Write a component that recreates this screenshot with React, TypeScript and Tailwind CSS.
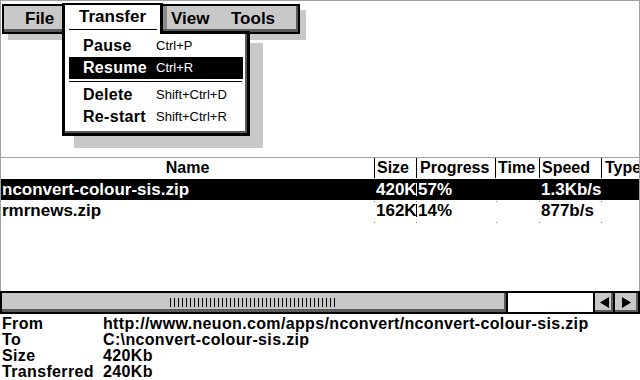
import React from 'react'

const font = "font-['Liberation_Sans',Arial,sans-serif]"

const columns = [
  { key: 'name', label: 'Name', w: 'w-[373px]', head: 'justify-center' },
  { key: 'size', label: 'Size', w: 'w-[42px]', head: 'pl-[2px]' },
  { key: 'progress', label: 'Progress', w: 'w-[79px]', head: 'pl-[3px]' },
  { key: 'time', label: 'Time', w: 'w-[44px]', head: 'pl-[2px]' },
  { key: 'speed', label: 'Speed', w: 'w-[62px]', head: 'pl-[2px]' },
  { key: 'type', label: 'Type', w: 'flex-1', head: 'pl-[3px]' },
]

const files = [
  { name: 'nconvert-colour-sis.zip', size: '420K', progress: '57%', time: '', speed: '1.3Kb/s', selected: true },
  { name: 'rmrnews.zip', size: '162K', progress: '14%', time: '', speed: '877b/s', selected: false },
]

const menuItems = [
  { label: 'Pause', keys: 'Ctrl+P', active: false, row: 'h-[23px]' },
  { label: 'Resume', keys: 'Ctrl+R', active: true, row: 'h-[22px]' },
  { label: 'Delete', keys: 'Shift+Ctrl+D', active: false, row: 'h-[22px]', sep: true },
  { label: 'Re-start', keys: 'Shift+Ctrl+R', active: false, row: 'h-[22px]' },
]

const details = [
  ['From', 'http://www.neuon.com/apps/nconvert/nconvert-colour-sis.zip'],
  ['To', 'C:\\nconvert-colour-sis.zip'],
  ['Size', '420Kb'],
  ['Transferred', '240Kb'],
]

function Grip() {
  return (
    <svg width="168" height="9" viewBox="0 0 168 9" className="block">
      {Array.from({ length: 42 }).map((_, i) => (
        <rect key={i} x={i * 4} y="0" width="1" height="9" fill="#000" />
      ))}
    </svg>
  )
}

function Arrow({ dir }: { dir: 'left' | 'right' }) {
  return (
    <svg width="9" height="11" viewBox="0 0 9 11" className="block">
      {dir === 'left' ? (
        <polygon points="9,0 9,11 0,5.5" fill="#000" />
      ) : (
        <polygon points="0,0 0,11 9,5.5" fill="#000" />
      )}
    </svg>
  )
}

function FileRow({ file }: { file: (typeof files)[number] }) {
  const sel = file.selected
  const cells = [file.name, file.size, file.progress, file.time, file.speed, '']
  return (
    <div className={`relative flex h-[21px] items-center text-[17px] font-bold leading-[21px] ${sel ? 'bg-black text-white' : 'text-black'}`}>
      {columns.map((c, i) => (
        <div
          key={c.key}
          className={`${c.w} relative h-full overflow-hidden whitespace-nowrap ${i === 0 ? 'pl-[1px]' : 'pl-[2px]'}`}
        >
          {cells[i]}
          {i === 2 && (
            <span className={`absolute left-0 top-[4px] h-[13px] w-px ${sel ? 'bg-white' : 'bg-black'}`} />
          )}
        </div>
      ))}
      {/* dotted column ticks below the row */}
      <div className="absolute bottom-[-1px] left-0 right-0 flex">
        {[373, 415, 495, 538, 600].map((x) => (
          <span key={x} className="absolute h-px w-px bg-[#808080]" style={{ left: x }} />
        ))}
      </div>
    </div>
  )
}

function MenuOverlay() {
  return (
    <>
      {/* shadows */}
      <div className="absolute left-[8px] top-[10px] h-[30px] w-[298px] bg-[#c8c8c8]" />
      <div className="absolute left-[74px] top-[43px] h-[105px] w-[189px] bg-[#c8c8c8]" />

      {/* menu bar */}
      <div className="absolute left-[2px] top-[4px] flex h-[30px] w-[298px] border-2 border-black bg-[#c8c8c8] text-[17px] font-bold leading-[25px] shadow-[inset_-2px_-3px_0_0_#5a5a5a]">
        <div className="w-[58px] pl-[21px]">File</div>
        <div className="w-[101px]" />
        <div className="h-[23px] w-[4px] bg-[#8c8c8c]" />
        <div className="w-[62px] pl-[4px]">View</div>
        <div className="pl-[2px]">Tools</div>
      </div>

      {/* dropdown panel */}
      <div className="absolute left-[62px] top-[31px] h-[105px] w-[188px] border-[3px] border-black bg-white shadow-[inset_-2px_-2px_0_0_#5a5a5a]">
        <div className="px-[4px]">
          {menuItems.map((m) => (
            <React.Fragment key={m.label}>
              {m.sep && (
                <div className="flex h-[5px] items-center">
                  <div className="h-px w-[173px] bg-black" />
                </div>
              )}
              <div
                className={`flex w-[174px] items-center ${m.row} ${m.active ? 'bg-black text-white' : 'text-black'}`}
              >
                <span className="w-[87px] pl-[14px] text-[16px] font-bold tracking-[0.3px]">{m.label}</span>
                <span className="text-[13px]">{m.keys}</span>
              </div>
            </React.Fragment>
          ))}
        </div>
      </div>

      {/* Transfer tab */}
      <div className="absolute left-[62px] top-[3px] h-[31px] w-[101px] border-x-[3px] border-t-2 border-black bg-white">
        <div className="pl-[14px] text-[17px] font-bold leading-[24px]">Transfer</div>
        <div className="ml-[4px] h-px w-[88px] bg-black" />
      </div>
    </>
  )
}

export default function App() {
  return (
    <div className={`relative h-[380px] w-[640px] overflow-hidden bg-white text-black ${font}`}>
      {/* top area */}
      <div className="h-[157px] border-x border-t border-[#a0a0a0]" />

      {/* file list */}
      <div className="h-[134px] border-x border-t border-[#a0a0a0]">
        <div className="flex h-[20px] text-[16px] font-bold leading-[20px]">
          {columns.map((c, i) => (
            <div
              key={c.key}
              className={`${c.w} flex overflow-hidden whitespace-nowrap ${c.head} ${i > 0 ? 'border-l border-black' : ''}`}
            >
              {c.label}
            </div>
          ))}
        </div>
        <div className="h-px" />
        {files.map((f) => (
          <FileRow key={f.name} file={f} />
        ))}
      </div>

      {/* horizontal scrollbar */}
      <div className="flex h-[23px]">
        <div className="flex w-[508px] items-center justify-center border-2 border-black bg-[#c8c8c8] shadow-[inset_-2px_-3px_0_0_#5a5a5a]">
          <Grip />
        </div>
        <div className="flex-1 border-y-2 border-black bg-white" />
        <div className="flex w-[22px] items-center justify-center border-2 border-black bg-[#c8c8c8] shadow-[inset_-2px_-2px_0_0_#5a5a5a]">
          <Arrow dir="left" />
        </div>
        <div className="flex w-[25px] items-center justify-center border-y-2 border-r-2 border-black bg-[#c8c8c8] shadow-[inset_-2px_-2px_0_0_#5a5a5a]">
          <Arrow dir="right" />
        </div>
      </div>

      {/* transfer details */}
      <div className="px-[2px] pt-[2px] text-[16px] font-bold leading-[16px] tracking-[0.35px]">
        {details.map(([k, v]) => (
          <div key={k} className="flex h-[16px] whitespace-nowrap">
            <span className="w-[101px]">{k}</span>
            <span>{v}</span>
          </div>
        ))}
      </div>

      <MenuOverlay />
    </div>
  )
}
